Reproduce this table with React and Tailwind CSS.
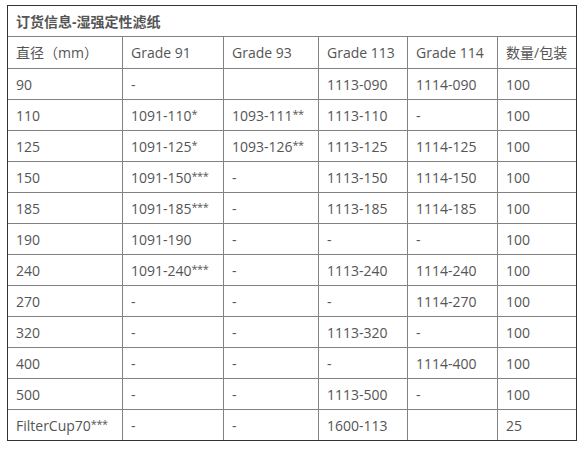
import React from "react";

const rows = [
  ["90", "-", "", "1113-090", "1114-090", "100"],
  ["110", "1091-110*", "1093-111**", "1113-110", "-", "100"],
  ["125", "1091-125*", "1093-126**", "1113-125", "1114-125", "100"],
  ["150", "1091-150***", "-", "1113-150", "1114-150", "100"],
  ["185", "1091-185***", "-", "1113-185", "1114-185", "100"],
  ["190", "1091-190", "-", "-", "-", "100"],
  ["240", "1091-240***", "-", "1113-240", "1114-240", "100"],
  ["270", "-", "-", "-", "1114-270", "100"],
  ["320", "-", "-", "1113-320", "-", "100"],
  ["400", "-", "-", "-", "1114-400", "100"],
  ["500", "-", "-", "1113-500", "-", "100"],
  ["FilterCup70***", "-", "-", "1600-113", "", "25"],
];

const header = ["直径（mm）", "Grade 91", "Grade 93", "Grade 113", "Grade 114", "数量/包装"];

function Cell({ text }) {
  const m = text.match(/^(.*?)(\*+)$/);
  if (!m) return text;
  return (
    <>
      {m[1]}
      <span className="text-[11px] tracking-[-0.5px] relative top-[-1px]">{m[2]}</span>
    </>
  );
}

function Row({ cells, h }) {
  return (
    <div className={`grid grid-cols-[114px_101px_95px_89px_90px_79px] border-t border-[#828282] ${h}`}>
      {cells.map((c, i) => (
        <div
          key={i}
          className={`flex items-center pl-[8px] whitespace-nowrap ${i > 0 ? "border-l border-[#828282]" : ""}`}
        >
          <Cell text={c} />
        </div>
      ))}
    </div>
  );
}

export default function App() {
  return (
    <div className="w-[588px] h-[473px] bg-white pt-[5px] pl-[7px]">
      <div
        className="w-[570px] border border-[#333] text-[14px] text-[#555]"
        style={{ fontFamily: '"Open Sans", "Noto Sans CJK SC", sans-serif' }}
      >
        <div className="h-[30px] flex items-center pl-[8px] font-bold text-[14px]">订货信息-湿强定性滤纸</div>
        <Row cells={header} h="h-[32px]" />
        {rows.map((r, i) => (
          <Row key={i} cells={r} h="h-[31px]" />
        ))}
      </div>
    </div>
  );
}
